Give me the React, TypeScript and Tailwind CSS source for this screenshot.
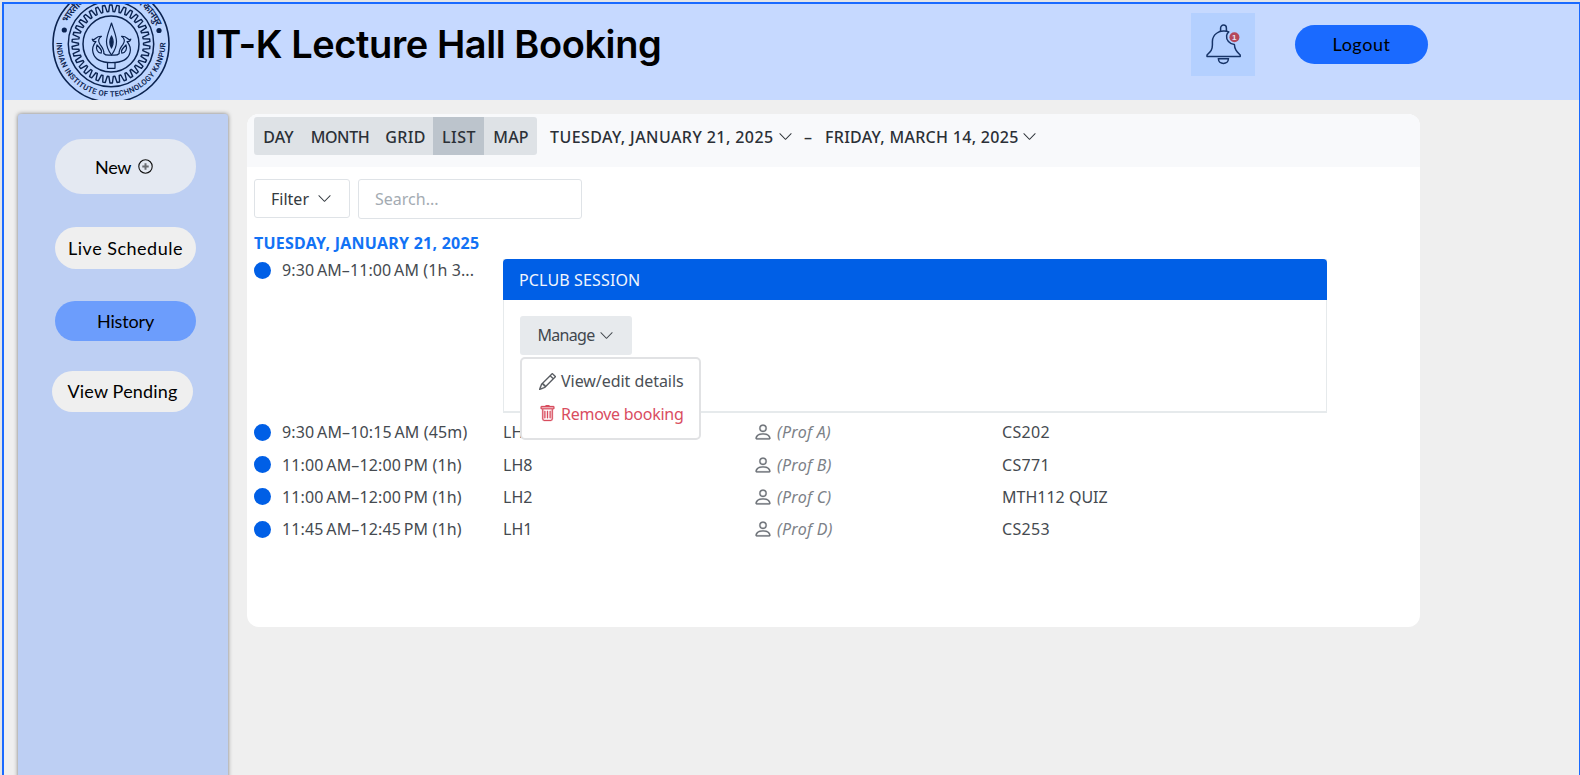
import React from "react";
import { BsChevronDown, BsPencil, BsPerson, BsTrash } from "react-icons/bs";

const GEAR_TEETH = 34;

function gearPath(cx: number, cy: number, inner: number, outer: number) {
  const step = (Math.PI * 2) / GEAR_TEETH;
  const at = (r: number, a: number) =>
    `${(cx + r * Math.cos(a)).toFixed(2)} ${(cy + r * Math.sin(a)).toFixed(2)}`;
  let d = "";
  for (let i = 0; i < GEAR_TEETH; i++) {
    const a = i * step - Math.PI / 2 - step * 0.2;
    d += `${i === 0 ? "M" : "L"}${at(outer, a)} L${at(outer, a + step * 0.35)} L${at(inner, a + step * 0.55)} L${at(inner, a + step * 0.82)} `;
  }
  return d + "Z";
}

function Crest() {
  return (
    <svg className="block h-24 w-[216px]" viewBox="4 4 216 96" fill="none" stroke="#0b2350">
      <defs>
        <path id="crest-bottom" d="M56.4 42 A54.6 54.6 0 0 0 165.6 42" />
        <path id="crest-top" d="M63 43.5 A48 48 0 0 1 159 43.5" />
      </defs>
      <circle cx="111" cy="44" r="58" strokeWidth="1.6" />
      <circle cx="111" cy="44" r="42.7" strokeWidth="1.5" />
      <circle cx="111" cy="44" r="28" strokeWidth="1.5" />
      <path d={gearPath(111, 44, 32.5, 39)} strokeWidth="1.4" strokeLinejoin="round" />
      <circle cx="64.3" cy="30" r="2.6" fill="#0b2350" stroke="none" />
      <circle cx="159" cy="30.5" r="2.6" fill="#0b2350" stroke="none" />
      <g strokeWidth="1.2" strokeLinejoin="round" strokeLinecap="round">
        <path d="M111.5 23 C109 31 106.5 36 106.5 41.5 C106.5 47 108.5 51 111.5 55 C114.5 51 116.5 47 116.5 41.5 C116.5 36 114 31 111.5 23Z" />
        <path d="M111.5 36 C109.6 39.5 109.4 44.5 111.5 48 C113.6 44.5 113.4 39.5 111.5 36Z" fill="#0b2350" />
        <path d="M101.5 36.3 C99 36 97 37.2 95.5 38.5 C94.4 39.6 93 40 92.2 39.2 C92.8 41.5 94.2 42 96 41.6 C93.4 44.5 92 48.5 93 52.5 C94.5 59 101 62.6 111.5 62.6 C122 62.6 128.5 59 130 52.5 C131 48.5 129.6 44.5 127 41.6 C128.8 42 130.2 41.5 130.8 39.2 C130 40 128.6 39.6 127.5 38.5 C126 37.2 124 36 121.5 36.3 C125 38.5 125 41.5 123 44.3 C120.5 47.5 118.8 50 119.2 53.5 C117.5 55.5 115 55.5 111.5 55 C108 55.5 105.5 55.5 103.8 53.5 C104.2 50 102.5 47.5 100 44.3 C98 41.5 98 38.5 101.5 36.3Z" />
        <path d="M97 45 C95.5 49 97.5 53 101.2 53.2 C103 51 100 48 97 45Z M126 45 C127.5 49 125.5 53 121.8 53.2 C120 51 123 48 126 45Z" />
        <path d="M107.5 62.5 V68.3 H115 V62.5" />
      </g>
      <g className="font-['Roboto',sans-serif]" fill="#0b2350" stroke="none" fontSize="7.6" fontWeight="600">
        <text>
          <textPath href="#crest-bottom" textLength="170" lengthAdjust="spacing" startOffset="0.5">
            INDIAN INSTITUTE OF TECHNOLOGY KANPUR
          </textPath>
        </text>
      </g>
      <g className="font-['Noto_Sans',sans-serif]" fill="#0b2350" stroke="none" fontSize="10" fontWeight="600">
        <text>
          <textPath href="#crest-top" textLength="112" lengthAdjust="spacing" startOffset="20">
            भारतीय प्रौद्योगिकी संस्थान कानपुर
          </textPath>
        </text>
      </g>
    </svg>
  );
}

function Bell() {
  return (
    <svg className="block h-[63px] w-16" viewBox="0 0 64 63" fill="none" stroke="#173468" strokeWidth="1.5">
      <path d="M29.6 18.4 V15 A2.9 2.9 0 0 1 35.4 15 V18.4" />
      <path
        d="M37.8 19 C35.5 17.7 29.5 17.4 26 20 C23 22 21.4 25 21.4 28.5 V32 C21.4 37 19.5 38.5 16 42 V43.6 H49.2 V42 C45.8 38.5 43.6 36.5 43.4 31.5 C38.5 31.2 35 27 35.6 22.6 C35.8 21 36.6 19.9 37.8 19Z"
        strokeLinejoin="round"
      />
      <path d="M27.4 45.8 H37.4 C37.4 48.6 35.2 50.4 32.4 50.4 C29.6 50.4 27.4 48.6 27.4 45.8Z" />
      <circle cx="43.4" cy="24.2" r="5" fill="#b5485a" stroke="none" />
      <text
        x="43.2"
        y="27"
        textAnchor="middle"
        fontSize="8"
        fontWeight="700"
        fill="#e6e4f2"
        stroke="none"
        className="font-['Liberation_Sans',sans-serif]"
      >
        1
      </text>
    </svg>
  );
}

function PlusCircle() {
  return (
    <svg className="-mt-0.5 -ml-px size-[15px]" viewBox="0 0 15 15" fill="none">
      <circle cx="7.5" cy="7.5" r="6.7" stroke="#111" strokeWidth="1.1" />
      <path d="M7.5 4.3V10.7M4.3 7.5H10.7" stroke="#6a6d72" strokeWidth="2" />
    </svg>
  );
}

const views = [
  { label: "DAY", box: "w-[48px] tracking-[0.05px]" },
  { label: "MONTH", box: "w-[75px] tracking-[-0.4px]" },
  { label: "GRID", box: "w-[56px] tracking-[0.36px]" },
  { label: "LIST", box: "w-[51px] tracking-[0.5px] bg-[#bcc4cc]" },
  { label: "MAP", box: "w-[53px] tracking-[0.16px]" },
];

const bookings = [
  { time: "9:30\u2009AM–10:15\u2009AM (45m)", room: "LH4,", prof: "(Prof A)", title: "CS202" },
  { time: "11:00\u2009AM–12:00\u2009PM (1h)", room: "LH8", prof: "(Prof B)", title: "CS771" },
  { time: "11:00\u2009AM–12:00\u2009PM (1h)", room: "LH2", prof: "(Prof C)", title: "MTH112 QUIZ" },
  { time: "11:45\u2009AM–12:45\u2009PM (1h)", room: "LH1", prof: "(Prof D)", title: "CS253" },
];

function Dot() {
  return <span className="size-[17px] shrink-0 rounded-full bg-[#005fe6]" />;
}

function Header() {
  return (
    <header className="flex h-24 shrink-0 items-start bg-[#c6d9ff]">
      <div className="h-24 w-[216px] shrink-0 bg-[#bdd5ff]">
        <Crest />
      </div>
      <h1 className="-ml-[24px] mt-[16px] w-[995px] whitespace-nowrap font-['Inter',sans-serif] text-[38px] leading-[48px] font-semibold tracking-[-0.43px] text-black">
        IIT-K Lecture Hall Booking
      </h1>
      <div className="mt-[9px] h-[63px] w-16 bg-[#b4d0ff]">
        <Bell />
      </div>
      <button className="mt-[21px] ml-10 h-[39px] w-[133px] rounded-full bg-[#1a6aff] pb-px font-['Lato',sans-serif] text-[18px] tracking-[0.55px] text-black">
        Logout
      </button>
    </header>
  );
}

function Sidebar() {
  return (
    <aside className="mt-[14px] ml-3.5 flex h-[680px] w-[210px] shrink-0 flex-col items-start rounded-[3px] bg-[#bdcff3] pt-[25px] pl-[37px] font-['Lato',sans-serif] text-[18px] text-black shadow-[0_0_4px_rgba(0,0,0,0.5)]">
      <button className="flex h-[55px] w-[141px] items-center gap-2 rounded-[27px] bg-[#e4e9f2] pt-0.5 pl-10 tracking-[-0.3px]">
        New <PlusCircle />
      </button>
      <button className="mt-[33px] h-[42px] w-[141px] rounded-full bg-[#efefef] tracking-[0.5px] whitespace-nowrap">
        Live Schedule
      </button>
      <button className="mt-8 h-10 w-[141px] rounded-full bg-[#6c9dfc] tracking-[-0.15px]">History</button>
      <button className="mt-[30px] -ml-[3px] h-[41px] w-[141px] rounded-full bg-[#efefef] tracking-[0.18px] whitespace-nowrap">
        View Pending
      </button>
    </aside>
  );
}

function Toolbar() {
  return (
    <div className="flex h-[53px] items-start rounded-t-xl bg-[#f8f9fb] pt-[3px] pl-[7px] font-medium text-[#2b3036]">
      <div className="flex h-[38px] overflow-hidden rounded-[3px] bg-[#dee2e6]">
        {views.map((v) => (
          <button key={v.label} className={`h-full pt-px pl-px text-center ${v.box}`}>
            {v.label}
          </button>
        ))}
      </div>
      <div className="ml-[13px] flex h-[38px] items-center pt-px whitespace-nowrap">
        <span className="w-[228px] tracking-[0.42px]">TUESDAY, JANUARY 21, 2025</span>
        <BsChevronDown className="size-[15px]" />
        <span className="w-[32px] pl-[11px]">–</span>
        <span className="w-[197px] tracking-[0.3px]">FRIDAY, MARCH 14, 2025</span>
        <BsChevronDown className="size-[15px]" />
      </div>
    </div>
  );
}

function SessionCard() {
  return (
    <section className="relative -ml-px h-[153.5px] w-[824px] border border-b-2 border-[#e6eaec]">
      <div className="-mx-px -mt-px flex h-[41px] items-center rounded-t bg-[#005fe6] pl-4 tracking-[0.14px] text-[#f1f5fd]">
        PCLUB SESSION
      </div>
      <button className="mt-4 ml-4 flex h-[39px] w-[112px] items-center justify-center gap-[4px] rounded-[3px] bg-[#e7eaed] pr-px pb-px text-[#42474d] tracking-[-0.7px]">
        Manage <BsChevronDown className="size-[15px]" />
      </button>
      <div className="absolute top-[97px] left-[16px] z-10 h-[83px] w-[181px] rounded-[5px] border-2 border-[#e1e2e4] bg-white pt-[6px] pl-[17px] leading-[32.5px] whitespace-nowrap">
        <div className="flex items-center gap-[5px]">
          <BsPencil className="size-[17px] text-[#50545a]" strokeWidth="0.3" />
          <span className="tracking-[-0.05px] text-[#4b5056]">View/edit details</span>
        </div>
        <div className="flex items-center gap-[5px] text-[#d94d5f]">
          <BsTrash className="size-[17px]" strokeWidth="0.3" />
          <span className="tracking-[-0.26px]">Remove booking</span>
        </div>
      </div>
    </section>
  );
}

function Schedule() {
  return (
    <main className="mt-[14px] ml-[19px] h-[513px] w-[1173px] shrink-0 rounded-xl bg-white font-['Noto_Sans',sans-serif] text-[16px] leading-6 text-[#454a50]">
      <Toolbar />
      <div className="mt-3 flex items-start gap-2 pl-[7px]">
        <button className="flex h-[39px] w-24 items-center justify-center gap-2 rounded-[3px] border border-[#dfe3e7] pr-px text-[#343a40]">
          Filter <BsChevronDown className="size-[15px]" />
        </button>
        <input
          className="h-10 w-[224px] rounded-[3px] border border-[#dfe3e7] px-4 placeholder:text-[#a4abb2]"
          placeholder="Search..."
        />
      </div>
      <h2 className="mt-[12px] ml-[7px] font-bold tracking-[0.25px] text-[#1272f5]">TUESDAY, JANUARY 21, 2025</h2>
      <div className="mt-1 flex pl-[7px]">
        <div className="-mt-px flex h-6 w-[250px] items-center gap-[11px] tracking-[0.1px] whitespace-nowrap">
          <Dot />
          {"9:30\u2009AM–11:00\u2009AM (1h 3..."}
        </div>
        <SessionCard />
      </div>
      <ul className="mt-[3.5px] pl-[7px]">
        {bookings.map((b) => (
          <li key={`${b.room}${b.title}`} className="flex h-[32.4px] items-center whitespace-nowrap">
            <div className="flex w-[249px] items-center gap-[11px] tracking-[0.13px]">
              <Dot />
              {b.time}
            </div>
            <span className="w-[250px]">{b.room}</span>
            <span className="flex w-[249px] items-center gap-[4px] text-[#7c8187] italic tracking-[0.3px]">
              <BsPerson className="size-[20px] text-[#6a6f75]" strokeWidth="0.2" />
              {b.prof}
            </span>
            <span className={b.title.length > 5 ? "" : "tracking-[0.35px]"}>{b.title}</span>
          </li>
        ))}
      </ul>
    </main>
  );
}

export default function App() {
  return (
    <div className="h-[775px] w-[1580px] overflow-hidden bg-[#e4e5e8] pt-0.5 pl-0.5">
      <div className="flex h-[773px] flex-col overflow-hidden border-t-2 border-r border-l-2 border-[#1a6aff] bg-[#efefef]">
        <Header />
        <div className="flex items-start">
          <Sidebar />
          <Schedule />
        </div>
      </div>
    </div>
  );
}
